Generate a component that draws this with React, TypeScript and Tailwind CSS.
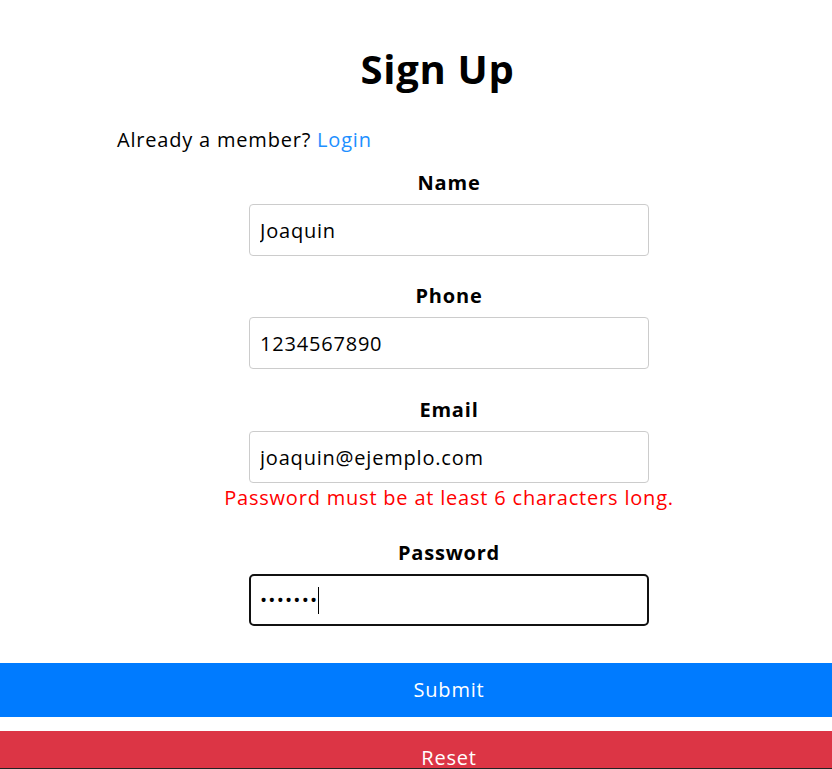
import React from "react";

const font = { fontFamily: '"Open Sans", "Noto Sans", sans-serif' };

function Label({ children }: { children: React.ReactNode }) {
  return <label className="h-[30px] text-[20px] font-bold leading-[30px] tracking-[0.8px] text-black">{children}</label>;
}

function Field({ label, value }: { label: string; value: string }) {
  return (
    <div className="flex flex-col items-center pl-[66px]">
      <Label>{label}</Label>
      <div className="mt-[6px] w-[400px]">
        <input
          readOnly
          type="text"
          value={value}
          className="h-[52px] w-full rounded-[4px] border border-[#ccc] px-[10px] text-[20px] tracking-[0.8px] text-black outline-none"
        />
      </div>
    </div>
  );
}

export default function App() {
  return (
    <div style={font} className="h-[769px] overflow-hidden border-b border-[#222] bg-white">
      <div className="pt-[45px]">
        <h1 className="flex justify-center pl-[43px] text-[40px] font-bold leading-[48px] tracking-[0.7px] text-black">Sign Up</h1>
        <p className="mt-[32px] h-[30px] pl-[117px] text-[20px] leading-[30px] tracking-[0.8px] text-black">
          Already a member? <a className="text-[#1e90ff]">Login</a>
        </p>
        <div className="mt-[13px]">
          <Field label="Name" value="Joaquin" />
          <div className="h-[25px]" />
          <Field label="Phone" value="1234567890" />
          <div className="h-[26px]" />
          <Field label="Email" value="joaquin@ejemplo.com" />
          <div className="flex h-[30px] justify-center pl-[66px] text-[20px] leading-[30px] tracking-[0.8px] text-[#ff0000]">
            Password must be at least 6 characters long.
          </div>
          <div className="h-[25px]" />
          <div className="flex flex-col items-center pl-[66px]">
            <Label>Password</Label>
            <div className="mt-[6px] flex h-[52px] w-[400px] items-center rounded-[5px] border-2 border-[#111] px-[9px]">
              <span className="text-[19px] leading-none tracking-[1.2px] text-black">•••••••</span>
              <span className="h-[27px] w-[1px] bg-black" />
            </div>
          </div>
        </div>
        <button className="mt-[37px] flex h-[54px] w-full items-center justify-center bg-[#007bff] pl-[66px] text-[20px] tracking-[0.8px] text-white">
          Submit
        </button>
        <button className="mt-[14px] flex h-[54px] w-full items-center justify-center bg-[#dc3545] pl-[66px] text-[20px] tracking-[0.8px] text-white">
          Reset
        </button>
      </div>
    </div>
  );
}
